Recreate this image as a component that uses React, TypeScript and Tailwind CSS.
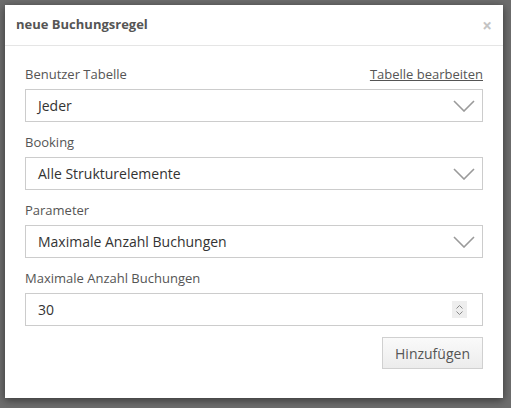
import React from 'react';

function Chevron() {
  return (
    <svg width="22" height="12" viewBox="0 0 22 12" className="shrink-0">
      <polyline points="1,1 11,11 21,1" fill="none" stroke="#9a9a9a" strokeWidth="1.6" />
    </svg>
  );
}

function Label({ children, right }: { children: React.ReactNode; right?: React.ReactNode }) {
  return (
    <div className="flex items-center justify-between h-[24px] pb-[4px] text-[13px] text-[#555]">
      <span>{children}</span>
      {right}
    </div>
  );
}

function SelectBox({ value }: { value: string }) {
  return (
    <div className="flex items-center justify-between h-[33px] border border-[#ccc] bg-white pl-3 pr-[7px] text-[14px] text-[#333]">
      <span>{value}</span>
      <Chevron />
    </div>
  );
}

export default function App() {
  return (
    <div className="w-[511px] h-[408px] bg-[#6d6d6d] pt-[5px] pl-[5px]" style={{ fontFamily: '"Open Sans", sans-serif' }}>
      <div className="w-[498px] h-[393px] bg-white shadow-[0_2px_8px_rgba(0,0,0,0.5)] flex flex-col">
        {/* Header */}
        <div className="h-[41px] border-b border-[#e5e5e5] flex items-center justify-between pl-[11px] pr-[11px]">
          <span className="text-[13px] font-bold text-[#555]">neue Buchungsregel</span>
          <span className="text-[17px] leading-none font-bold text-[#c4c4c4]">×</span>
        </div>

        {/* Body */}
        <div className="px-5 pt-[19px] flex flex-col">
          <Label right={<a className="underline text-[13px] text-[#555]">Tabelle bearbeiten</a>}>Benutzer Tabelle</Label>
          <SelectBox value="Jeder" />

          <div className="mt-[11px]"><Label>Booking</Label></div>
          <SelectBox value="Alle Strukturelemente" />

          <div className="mt-[11px]"><Label>Parameter</Label></div>
          <SelectBox value="Maximale Anzahl Buchungen" />

          <div className="mt-[11px]"><Label>Maximale Anzahl Buchungen</Label></div>
          <div className="flex items-center justify-between h-[33px] border border-[#ccc] bg-white pl-3 pr-[15px] text-[14px] text-[#333]">
            <span>30</span>
            <div className="w-[15px] h-[17px] bg-[#eee] flex flex-col items-center justify-center gap-[2px]">
              <svg width="7" height="4" viewBox="0 0 7 4"><polyline points="0.5,3.5 3.5,0.5 6.5,3.5" fill="none" stroke="#888" strokeWidth="1" /></svg>
              <svg width="7" height="4" viewBox="0 0 7 4"><polyline points="0.5,0.5 3.5,3.5 6.5,0.5" fill="none" stroke="#888" strokeWidth="1" /></svg>
            </div>
          </div>

          <div className="flex justify-end mt-[11px]">
            <button className="w-[101px] h-[32px] border border-[#d0d0d0] bg-gradient-to-b from-[#fafafa] to-[#ececec] text-[14px] text-[#555]">
              Hinzufügen
            </button>
          </div>
        </div>
      </div>
    </div>
  );
}
